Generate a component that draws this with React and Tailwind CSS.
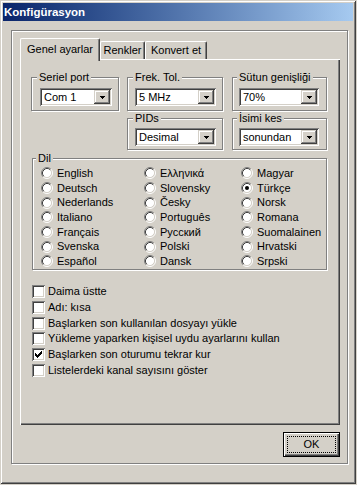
import React from "react";

const RadioIcon = ({ checked }) => (
  <svg width="12" height="12" viewBox="0 0 12 12" className="shrink-0">
    <circle cx="6" cy="6" r="4.5" fill="#ffffff" />
    <path d="M2.11 9.89A5.5 5.5 0 0 1 9.89 2.11" fill="none" stroke="#808080" />
    <path d="M9.89 2.11A5.5 5.5 0 0 1 2.11 9.89" fill="none" stroke="#ffffff" />
    <path d="M2.82 9.18A4.5 4.5 0 0 1 9.18 2.82" fill="none" stroke="#404040" />
    <path d="M9.18 2.82A4.5 4.5 0 0 1 2.82 9.18" fill="none" stroke="#d4d0c8" />
    {checked && <circle cx="6" cy="6" r="2" fill="#000000" />}
  </svg>
);

const CheckBox = ({ checked }) => (
  <div className="w-[13px] h-[13px] shrink-0 bg-white shadow-[inset_1px_1px_0_#808080,inset_-1px_-1px_0_#ffffff,inset_2px_2px_0_#404040,inset_-2px_-2px_0_#d4d0c8] flex items-center justify-center">
    {checked && (
      <svg width="7" height="7" viewBox="0 0 7 7" shapeRendering="crispEdges">
        <rect x="0" y="2" width="1" height="3" fill="#000" />
        <rect x="1" y="3" width="1" height="3" fill="#000" />
        <rect x="2" y="4" width="1" height="3" fill="#000" />
        <rect x="3" y="3" width="1" height="3" fill="#000" />
        <rect x="4" y="2" width="1" height="3" fill="#000" />
        <rect x="5" y="1" width="1" height="3" fill="#000" />
        <rect x="6" y="0" width="1" height="3" fill="#000" />
      </svg>
    )}
  </div>
);

const Combo = ({ value, className }) => (
  <div
    className={`h-[18px] bg-white flex items-center p-[2px] shadow-[inset_1px_1px_0_#808080,inset_-1px_-1px_0_#ffffff,inset_2px_2px_0_#404040,inset_-2px_-2px_0_#d4d0c8] ${className}`}
  >
    <span className="flex-1 pl-[2px] leading-[14px] whitespace-nowrap overflow-hidden">{value}</span>
    <div className="w-[16px] h-[14px] shrink-0 bg-[#d4d0c8] flex items-center justify-center shadow-[inset_-1px_-1px_0_#404040,inset_1px_1px_0_#d4d0c8,inset_-2px_-2px_0_#808080,inset_2px_2px_0_#ffffff]">
      <svg width="5" height="3" viewBox="0 0 5 3" shapeRendering="crispEdges">
        <rect x="0" y="0" width="5" height="1" fill="#000" />
        <rect x="1" y="1" width="3" height="1" fill="#000" />
        <rect x="2" y="2" width="1" height="1" fill="#000" />
      </svg>
    </div>
  </div>
);

const Group = ({ label, className, labelClass = "ml-[5px]", children }) => (
  <div
    className={`flex flex-col border border-[#808080] shadow-[inset_1px_1px_0_#ffffff,1px_1px_0_#ffffff] ${className}`}
  >
    <span className={`self-start -mt-[7px] px-[2px] bg-[#d4d0c8] leading-[13px] whitespace-nowrap ${labelClass}`}>
      {label}
    </span>
    {children}
  </div>
);

const Radio = ({ label, checked }) => (
  <div className="flex items-center gap-[4px] whitespace-nowrap">
    <RadioIcon checked={checked} />
    <span className="leading-[13px]">{label}</span>
  </div>
);

const Check = ({ label, checked }) => (
  <div className="h-[15.7px] flex items-center gap-[3px] whitespace-nowrap">
    <CheckBox checked={checked} />
    <span className="leading-[13px]">{label}</span>
  </div>
);

const languages = [
  ["English", false],
  ["Deutsch", false],
  ["Nederlands", false],
  ["Italiano", false],
  ["Français", false],
  ["Svenska", false],
  ["Español", false],
  ["Ελληνικά", false],
  ["Slovensky", false],
  ["Česky", false],
  ["Português", false],
  ["Русский", false],
  ["Polski", false],
  ["Dansk", false],
  ["Magyar", false],
  ["Türkçe", true],
  ["Norsk", false],
  ["Romana", false],
  ["Suomalainen", false],
  ["Hrvatski", false],
  ["Srpski", false],
];

const checks = [
  ["Daima üstte", false],
  ["Adı: kısa", false],
  ["Başlarken son kullanılan dosyayı yükle", false],
  ["Yükleme yaparken kişisel uydu ayarlarını kullan", false],
  ["Başlarken son oturumu tekrar kur", true],
  ["Listelerdeki kanal sayısını göster", false],
];

export default function App() {
  return (
    <div className="w-[357px] h-[485px] bg-[#d4d0c8] font-['Liberation_Sans',Arial,sans-serif] text-[11px] text-black">
      <div className="w-[356px] h-[484px] flex flex-col p-[3px] shadow-[inset_1px_1px_0_#d4d0c8,inset_-1px_-1px_0_#404040,inset_2px_2px_0_#ffffff,inset_-2px_-2px_0_#808080]">
        {/* Title bar */}
        <div className="h-[18px] shrink-0 flex items-center pl-[1px] bg-linear-to-r from-[#0a246a] to-[#a6caf0]">
          <span className="text-white font-bold text-[11.5px] leading-[14px]">Konfigürasyon</span>
        </div>

        {/* Outer etched frame */}
        <div className="mt-[9px] ml-[8px] w-[337px] h-[434px] flex flex-col pt-[7px] pl-[8px] border border-[#808080] shadow-[inset_1px_1px_0_#ffffff,1px_1px_0_#ffffff]">
          {/* Tabs */}
          <div className="flex items-end h-[21px]">
            <div className="relative z-10 w-[80px] h-[23px] -mb-[2px] pb-[2px] flex items-center justify-center bg-[#d4d0c8] border-l border-t border-r border-l-white border-t-white border-r-[#404040] rounded-t-[2px] shadow-[inset_-1px_0_0_#808080]">
              Genel ayarlar
            </div>
            <div className="w-[45px] h-[18px] flex items-center justify-center border-l border-t border-r border-l-white border-t-white border-r-[#404040] rounded-t-[2px] shadow-[inset_-1px_0_0_#808080]">
              Renkler
            </div>
            <div className="w-[62px] h-[18px] flex items-center justify-center border-l border-t border-r border-l-white border-t-white border-r-[#404040] rounded-t-[2px] shadow-[inset_-1px_0_0_#808080]">
              Konvert et
            </div>
          </div>

          {/* Tab panel */}
          <div className="w-[320px] h-[366px] shrink-0 flex flex-col pt-[18px] pl-[11px] shadow-[inset_1px_1px_0_#ffffff,inset_-1px_-1px_0_#404040,inset_-2px_-2px_0_#808080]">
            <div className="flex">
              <Group label="Seriel port" className="w-[88px] h-[34px]">
                <Combo value="Com 1" className="w-[72px] ml-[8px] mt-[4px]" />
              </Group>
              <Group label="Frek. Tol." className="w-[96px] h-[34px] ml-[8px]">
                <Combo value="5 MHz" className="w-[81px] ml-[7px] mt-[4px]" />
              </Group>
              <Group label="Sütun genişliği" className="w-[95px] h-[34px] ml-[9px]" labelClass="ml-[4px]">
                <Combo value="70%" className="w-[80px] ml-[6px] mt-[4px]" />
              </Group>
            </div>

            <div className="flex mt-[7px] ml-[96px]">
              <Group label="PIDs" className="w-[96px] h-[32px]">
                <Combo value="Desimal" className="w-[81px] ml-[7px] mt-[3px]" />
              </Group>
              <Group label="İsimi kes" className="w-[95px] h-[32px] ml-[9px]" labelClass="ml-[4px]">
                <Combo value="sonundan" className="w-[80px] ml-[6px] mt-[3px]" />
              </Group>
            </div>

            <Group label="Dil" className="w-[295px] h-[112px] mt-[8px] ml-[1px]" labelClass="ml-[3px]">
              <div className="mt-[1px] pl-[8px] grid grid-cols-[103px_97px_1fr] grid-rows-[repeat(7,14.7px)] grid-flow-col">
                {languages.map(([name, checked]) => (
                  <Radio key={name} label={name} checked={checked} />
                ))}
              </div>
            </Group>

            <div className="mt-[14px] ml-[1px] flex flex-col">
              {checks.map(([label, checked]) => (
                <Check key={label} label={label} checked={checked} />
              ))}
            </div>
          </div>

          {/* OK button */}
          <div className="mt-[7px] ml-[263px] w-[57px] h-[25px] flex p-[3px] border border-black shadow-[inset_1px_1px_0_#ffffff,inset_-1px_-1px_0_#404040,inset_-2px_-2px_0_#808080]">
            <div className="flex-1 flex items-center justify-center border border-dotted border-black leading-[13px]">
              OK
            </div>
          </div>
        </div>
      </div>
    </div>
  );
}
